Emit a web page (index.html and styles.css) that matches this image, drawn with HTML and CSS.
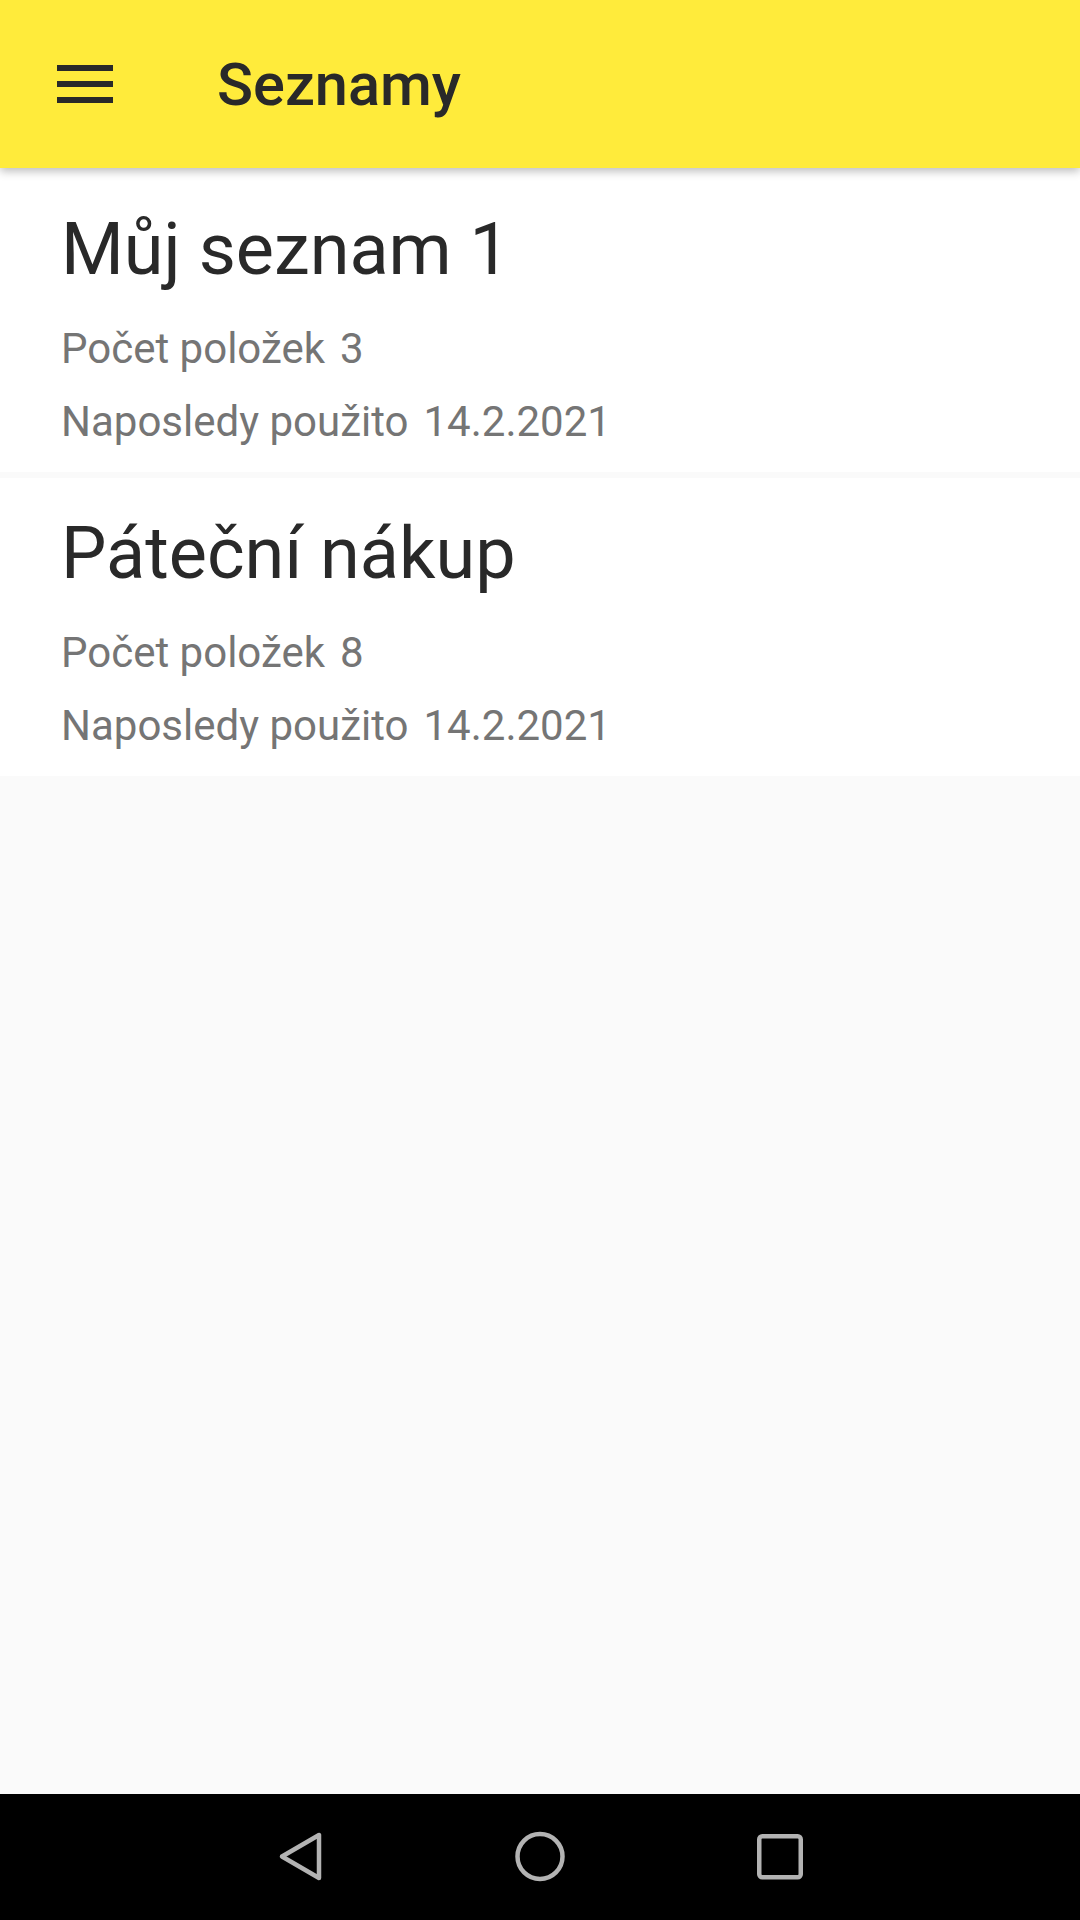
FILE: index.html
```html
<!DOCTYPE html>
<html lang="cs">
<head>
<meta charset="utf-8">
<title>Seznamy</title>
<link rel="stylesheet" href="styles.css">
</head>
<body>
<div class="screen">
  <header class="appbar">
    <svg class="menu" width="56" height="38" viewBox="0 0 56 38">
      <rect x="0" y="0" width="56" height="6" fill="#292929"/>
      <rect x="0" y="16" width="56" height="6" fill="#292929"/>
      <rect x="0" y="32" width="56" height="6" fill="#292929"/>
    </svg>
    <h1 class="title">Seznamy</h1>
  </header>
  <main class="list">
    <section class="card first">
      <div class="card-title">Můj seznam 1</div>
      <div class="meta"><span>Počet položek</span><span class="val">3</span></div>
      <div class="meta"><span>Naposledy použito</span><span class="val">14.2.2021</span></div>
    </section>
    <section class="card">
      <div class="card-title">Páteční nákup</div>
      <div class="meta"><span>Počet položek</span><span class="val">8</span></div>
      <div class="meta"><span>Naposledy použito</span><span class="val">14.2.2021</span></div>
    </section>
  </main>
  <nav class="navbar">
    <svg width="60" height="60" viewBox="0 0 60 60" class="nav-ico">
      <path d="M49 8 L49 51 L12 29.5 Z" fill="none" stroke="#b3b3b3" stroke-width="4.5" stroke-linejoin="round"/>
    </svg>
    <svg width="60" height="60" viewBox="0 0 60 60" class="nav-ico">
      <circle cx="30" cy="29.5" r="22.5" fill="none" stroke="#b3b3b3" stroke-width="4.5"/>
    </svg>
    <svg width="60" height="60" viewBox="0 0 60 60" class="nav-ico">
      <rect x="9.25" y="9.25" width="41.5" height="41" rx="3" fill="none" stroke="#b3b3b3" stroke-width="4.5"/>
    </svg>
  </nav>
</div>
</body>
</html>
```
FILE: styles.css
```css
html, body {
  margin: 0;
  padding: 0;
}
body {
  font-family: Roboto, "Noto Sans", sans-serif;
  background: #fafafa;
}
.screen {
  width: 1080px;
  height: 1920px;
  display: flex;
  flex-direction: column;
  overflow: hidden;
}
.appbar {
  height: 168px;
  flex: 0 0 168px;
  box-sizing: border-box;
  background: #ffeb3b;
  display: flex;
  align-items: center;
  padding-left: 57px;
  box-shadow: 0 3px 9px rgba(0, 0, 0, 0.28);
  position: relative;
  z-index: 2;
}
.menu {
  display: block;
  flex: 0 0 auto;
}
.title {
  margin: 4px 0 0 104px;
  font-size: 59.5px;
  font-weight: 500;
  color: #292929;
  line-height: 1;
}
.list {
  flex: 1 1 auto;
  background: #fafafa;
  display: flex;
  flex-direction: column;
  gap: 6px;
}
.card {
  background: #fff;
  padding: 34px 20px 14px 61px;
}
.card.first {
  padding-top: 40px;
}
.card-title {
  font-size: 72px;
  line-height: 84px;
  color: #292929;
  margin-bottom: 20px;
}
.meta {
  font-size: 42px;
  line-height: 73px;
  color: #757575;
  display: flex;
}
.val {
  margin-left: 15px;
}
.navbar {
  flex: 0 0 126px;
  height: 126px;
  background: #000;
  display: flex;
  align-items: center;
  justify-content: center;
  gap: 180px;
}
.nav-ico {
  display: block;
}
```
